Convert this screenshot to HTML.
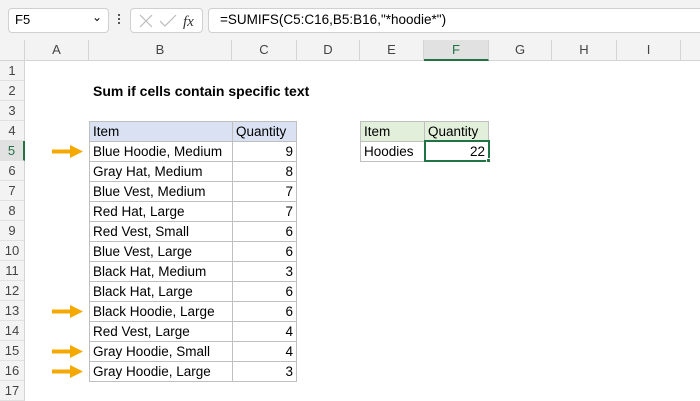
<!DOCTYPE html><html><head><style>
*{margin:0;padding:0;box-sizing:border-box}
body{width:700px;height:400px;overflow:hidden;background:#fff;font-family:"Liberation Sans",Calibri,sans-serif;position:relative}
.a{position:absolute}
.t{font-size:13px;color:#000;white-space:nowrap}
.hd{position:absolute;top:40px;height:21px;background:#f3f3f3;border-right:1px solid #d4d4d4;border-bottom:1px solid #d4d4d4;font-size:13px;color:#444;text-align:center;line-height:20px}
.rh{position:absolute;left:0;width:25px;height:20px;background:#f3f3f3;border-bottom:1px solid #e1e1e1;border-right:1px solid #d4d4d4;font-size:13px;color:#444;text-align:center;line-height:20px}
.c{position:absolute;height:21px;border:1px solid #bfbfbf;font-size:13.5px;line-height:19px;padding:0 3px;white-space:nowrap}
</style></head><body>
<div class="a" style="left:0;top:0;width:700px;height:40px;background:#f3f3f3"></div>
<div class="a" style="left:8px;top:8px;width:101px;height:25px;background:#fff;border:1px solid #d0d0d0;border-radius:4px"></div>
<div class="a t" style="left:15px;top:12px;font-size:13px">F5</div>
<div class="a t" style="left:92px;top:10px;font-size:12px">&#8964;</div>
<div class="a" style="left:118px;top:14px;width:2px;height:2px;background:#555;box-shadow:0 4px #555,0 8px #555"></div>
<div class="a" style="left:130px;top:8px;width:73px;height:25px;background:#fff;border:1px solid #d0d0d0;border-radius:4px"></div>
<svg class="a" style="left:138px;top:13px" width="60" height="16"><path d="M2 2L14 14M14 2L2 14" stroke="#bbb" stroke-width="1.2"/><path d="M22 8L27 13L38 2" stroke="#bbb" stroke-width="1.2" fill="none"/><text x="45" y="13" font-family="Liberation Serif" font-style="italic" font-size="15" fill="#333">fx</text></svg>
<div class="a" style="left:208px;top:8px;width:500px;height:25px;background:#fff;border:1px solid #d0d0d0;border-radius:4px"></div>
<div class="a t" style="left:220px;top:12px;font-size:13.5px">=SUMIFS(C5:C16,B5:B16,"*hoodie*")</div>
<div class="hd" style="left:0;width:25px"></div>
<div class="hd" style="left:25px;width:64px">A</div>
<div class="hd" style="left:89px;width:143px">B</div>
<div class="hd" style="left:232px;width:65px">C</div>
<div class="hd" style="left:297px;width:63px">D</div>
<div class="hd" style="left:360px;width:64px">E</div>
<div class="hd" style="left:424px;width:65px;background:#e1e1e1;border-bottom:2px solid #217346;color:#217346">F</div>
<div class="hd" style="left:489px;width:63px">G</div>
<div class="hd" style="left:552px;width:65px">H</div>
<div class="hd" style="left:617px;width:64px">I</div>
<div class="hd" style="left:681px;width:30px"></div>
<div id="rows"></div>
<div class="a t" style="left:93px;top:83px;font-weight:bold;font-size:14px">Sum if cells contain specific text</div>
<div class="c" style="left:89px;top:121px;width:144px;background:#d9e1f2">Item</div>
<div class="c" style="left:232px;top:121px;width:65px;background:#d9e1f2">Quantity</div>
<div class="c" style="left:360px;top:121px;width:65px;background:#e2efda">Item</div>
<div class="c" style="left:424px;top:121px;width:65px;background:#e2efda">Quantity</div>
<div class="c" style="left:360px;top:141px;width:65px">Hoodies</div>
<div class="c" style="left:424px;top:140px;width:66px;height:22px;border:2px solid #217346;text-align:right;padding-right:3px">22</div>
<div class="a" style="left:486px;top:158px;width:5px;height:5px;background:#217346;border:1px solid #fff"></div>
<script>
var r='';
for(var i=1;i<=17;i++){var bg=i==5?'background:#e1e1e1;border-right:2px solid #217346;color:#217346':'';r+='<div class="rh" style="top:'+(61+(i-1)*20)+'px;'+bg+'">'+i+'</div>';}
var d=[["Blue Hoodie, Medium",9,1],["Gray Hat, Medium",8],["Blue Vest, Medium",7],["Red Hat, Large",7],["Red Vest, Small",6],["Blue Vest, Large",6],["Black Hat, Medium",3],["Black Hat, Large",6],["Black Hoodie, Large",6,1],["Red Vest, Large",4],["Gray Hoodie, Small",4,1],["Gray Hoodie, Large",3,1]];
d.forEach(function(x,k){var y=141+k*20;r+='<div class="c" style="left:89px;top:'+y+'px;width:144px">'+x[0]+'</div><div class="c" style="left:232px;top:'+y+'px;width:65px;text-align:right">'+x[1]+'</div>';
if(x[2])r+='<svg class="a" style="left:52px;top:'+(y+4)+'px" width="32" height="13"><rect x="0" y="4.5" width="19" height="4" fill="#f5a800"/><path d="M18 0L31 6.5L18 13Z" fill="#f5a800"/></svg>';});
document.getElementById('rows').outerHTML=r;
</script>
</body></html>
